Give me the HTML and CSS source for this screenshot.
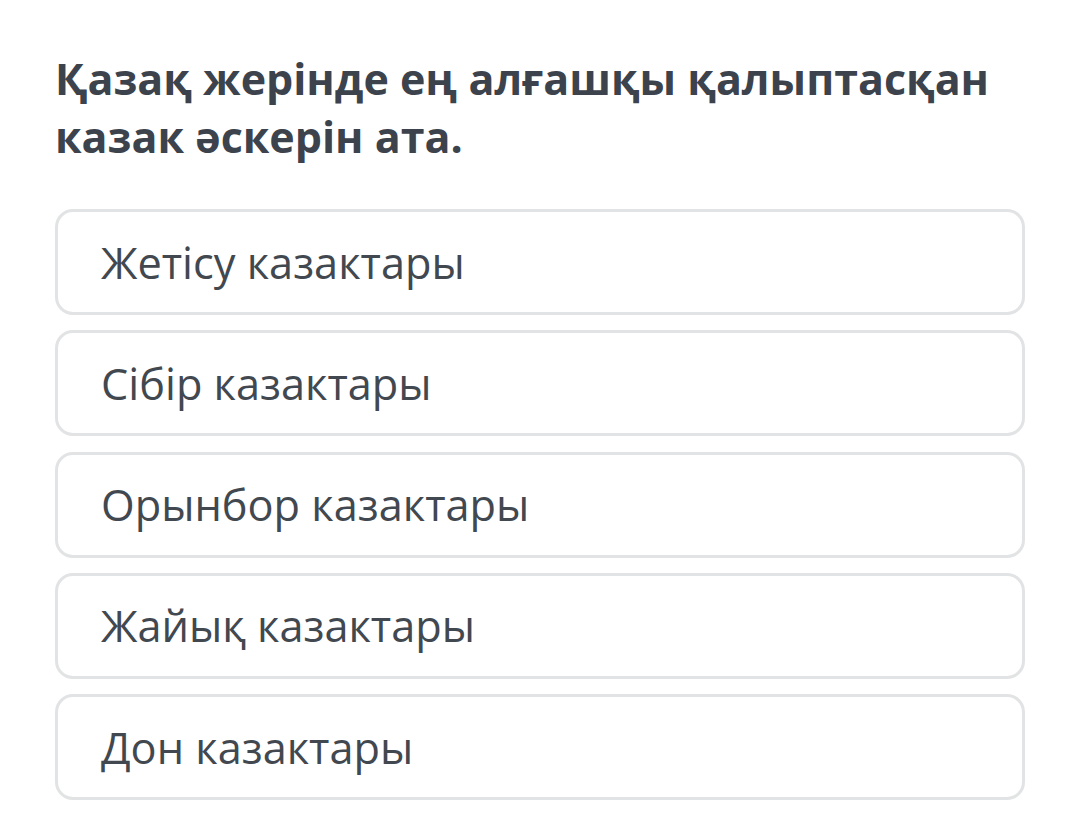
FILE: index.html
```html
<!DOCTYPE html>
<html lang="kk">
<head>
<meta charset="utf-8">
<link rel="stylesheet" href="styles.css">
</head>
<body>
<main class="quiz">
  <h1 class="question">Қазақ жерінде ең алғашқы қалыптасқан казак әскерін ата.</h1>
  <div class="options">
    <div class="option">Жетісу казактары</div>
    <div class="option">Сібір казактары</div>
    <div class="option">Орынбор казактары</div>
    <div class="option">Жайық казактары</div>
    <div class="option">Дон казактары</div>
  </div>
</main>
</body>
</html>
```

FILE: styles.css
```css
html, body {
  margin: 0;
  padding: 0;
  background: #ffffff;
}
body {
  font-family: "Open Sans", "Noto Sans", sans-serif;
}
.quiz {
  padding: 50px 55px 0 55px;
  width: 970px;
}
.question {
  margin: 0;
  font-size: 43px;
  font-weight: 700;
  line-height: 58px;
  color: #3c434c;
}
.options {
  margin-top: 43px;
  display: flex;
  flex-direction: column;
  gap: 15.25px;
}
.option {
  box-sizing: border-box;
  height: 106px;
  border: 3px solid #e2e3e4;
  border-radius: 18px;
  display: flex;
  align-items: center;
  padding-left: 43px;
  font-size: 43.3px;
  color: #42484f;
}
```
